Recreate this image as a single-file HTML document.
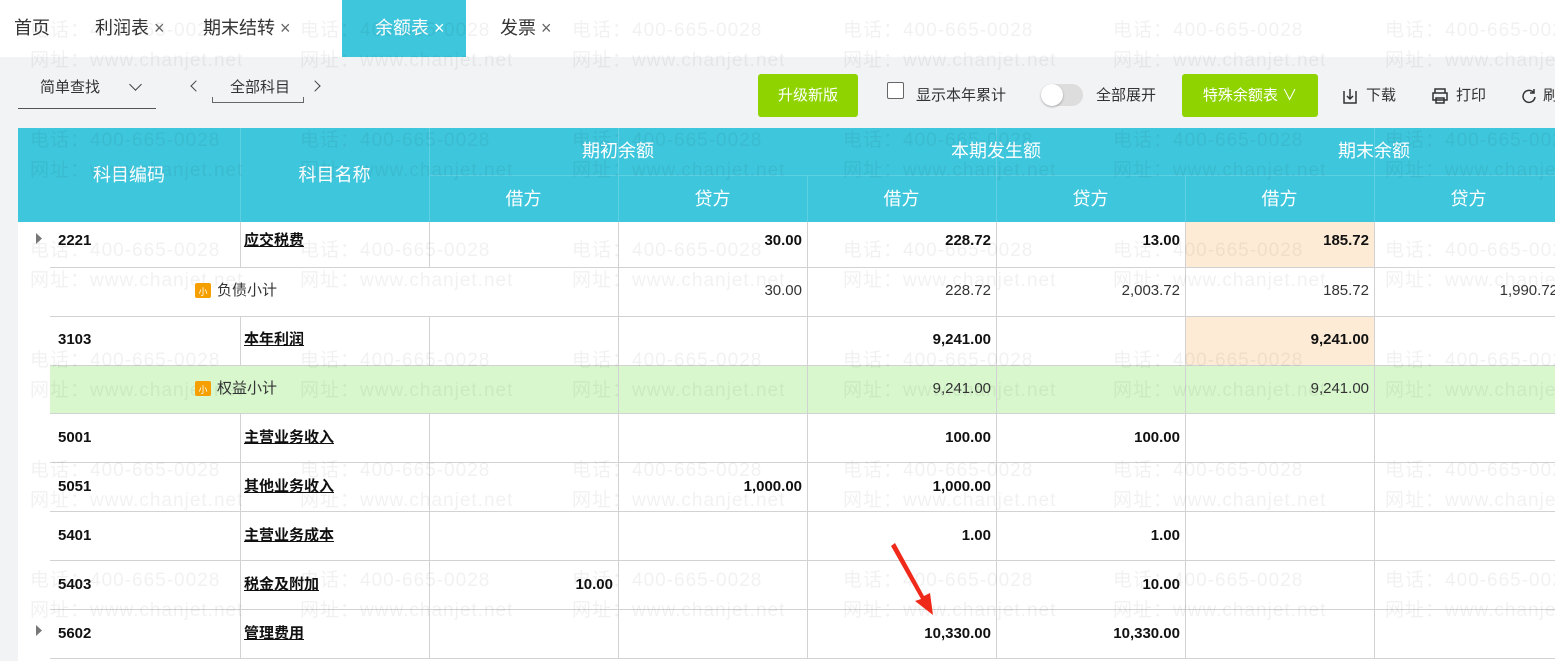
<!DOCTYPE html>
<html><head><meta charset="utf-8"><style>
*{margin:0;padding:0;box-sizing:border-box}
body{width:1555px;height:661px;overflow:hidden;background:#f2f3f5;font-family:"Liberation Sans","Noto Sans CJK SC",sans-serif;position:relative;color:#222}
.a{position:absolute}
.tabs{left:0;top:0;width:1555px;height:57px;background:#fff}
.tab{position:absolute;top:0;height:57px;line-height:57px;font-size:18px;color:#333}
.tb{font-size:15px;color:#333;line-height:20px}
.btn{background:#8fd400;color:#fff;border-radius:3px;font-size:15px;text-align:center;line-height:43px;height:43px;top:74px}
.c{position:absolute;font-size:15px;white-space:nowrap;line-height:20px}
.hd{color:#fff;font-size:18px;text-align:center;line-height:22px}
.b{font-weight:bold;color:#111}
.u{text-decoration:underline;font-weight:bold;color:#111}
.wm{position:absolute;font-size:19px;line-height:22px;color:rgba(0,0,0,0.055);letter-spacing:1px;white-space:nowrap;pointer-events:none}
</style></head><body>
<div class="a tabs"></div>
<div class="tab" style="left:14px">首页</div>
<div class="tab" style="left:95px">利润表 <span style="color:#666">×</span></div>
<div class="tab" style="left:203px">期末结转 <span style="color:#666">×</span></div>
<div class="tab" style="left:342px;width:124px;background:#3ec6dc;color:#fff;padding-left:33px">余额表 ×</div>
<div class="tab" style="left:500px">发票 <span style="color:#666">×</span></div>

<div class="a tb" style="left:40px;top:78px">简单查找</div>
<div class="a" style="left:131px;top:80px;width:9px;height:9px;border-right:1.5px solid #444;border-bottom:1.5px solid #444;transform:rotate(45deg)"></div>
<div class="a" style="left:18px;top:108px;width:138px;height:1px;background:#555"></div>
<div class="a" style="left:192px;top:82px;width:8px;height:8px;border-left:1.5px solid #444;border-bottom:1.5px solid #444;transform:rotate(45deg)"></div>
<div class="a tb" style="left:230px;top:78px">全部科目</div>
<div class="a" style="left:212px;top:97px;width:92px;height:6px;border:1px solid #666;border-top:none"></div>
<div class="a" style="left:311px;top:82px;width:8px;height:8px;border-right:1.5px solid #444;border-top:1.5px solid #444;transform:rotate(45deg)"></div>

<div class="a btn" style="left:758px;width:100px">升级新版</div>
<div class="a" style="left:887px;top:82px;width:17px;height:17px;border:1px solid #666;border-radius:2px;background:#fff"></div>
<div class="a tb" style="left:916px;top:86px">显示本年累计</div>
<div class="a" style="left:1041px;top:84px;width:42px;height:22px;border-radius:11px;background:#ddd"></div>
<div class="a" style="left:1041px;top:84px;width:22px;height:22px;border-radius:11px;background:#fff;box-shadow:0 1px 2px rgba(0,0,0,.3)"></div>
<div class="a tb" style="left:1096px;top:86px">全部展开</div>
<div class="a btn" style="left:1182px;width:136px">特殊余额表 ∨</div>
<svg class="a" style="left:1342px;top:87px" width="16" height="18"><path d="M2 4 V16 H14 V4 M8 2 V12 M5 9 L8 12 L11 9" stroke="#333" stroke-width="1.5" fill="none"/></svg>
<div class="a tb" style="left:1366px;top:86px">下载</div>
<svg class="a" style="left:1431px;top:87px" width="18" height="18"><path d="M4 6 V2 H14 V6 M2 6 H16 V13 H2 Z M5 11 H13 V16 H5 Z" stroke="#333" stroke-width="1.5" fill="none"/></svg>
<div class="a tb" style="left:1456px;top:86px">打印</div>
<svg class="a" style="left:1521px;top:88px" width="16" height="16"><path d="M13 5 A6 6 0 1 0 14 9 M13 1 V5 H9" stroke="#333" stroke-width="1.5" fill="none"/></svg>
<div class="a tb" style="left:1543px;top:86px">刷</div>

<!-- table -->
<div class="a" style="left:18px;top:128px;width:1545px;height:94px;background:#3ec6dc"></div>
<div class="a" style="left:18px;top:222px;width:1545px;height:439px;background:#fff"></div>
<div class="a" style="left:50px;top:365px;width:1513px;height:48px;background:#d8f7cd"></div>
<div class="a" style="left:1185px;top:222px;width:189px;height:45px;background:#fdebd5"></div>
<div class="a" style="left:1185px;top:316px;width:189px;height:49px;background:#fdebd5"></div>
<div id="lines"></div>

<div class="c hd" style="left:18px;top:164px;width:222px">科目编码</div>
<div class="c hd" style="left:240px;top:164px;width:189px">科目名称</div>
<div class="c hd" style="left:429px;top:140px;width:378px">期初余额</div>
<div class="c hd" style="left:807px;top:140px;width:378px">本期发生额</div>
<div class="c hd" style="left:1185px;top:140px;width:378px">期末余额</div>
<div class="c hd" style="left:429px;top:188px;width:189px">借方</div>
<div class="c hd" style="left:618px;top:188px;width:189px">贷方</div>
<div class="c hd" style="left:807px;top:188px;width:189px">借方</div>
<div class="c hd" style="left:996px;top:188px;width:189px">贷方</div>
<div class="c hd" style="left:1185px;top:188px;width:189px">借方</div>
<div class="c hd" style="left:1374px;top:188px;width:189px">贷方</div>

<div id="body"></div>

<svg class="a" style="left:0;top:0" width="1555" height="661">
<polygon points="36,233 42,238.5 36,244" fill="#777"/>
<polygon points="36,625 42,630.5 36,636" fill="#777"/>
<rect x="195" y="283" width="16" height="15" rx="2" fill="#f5a000"/>
<rect x="195" y="381" width="16" height="15" rx="2" fill="#f5a000"/>
<text x="203" y="295" font-size="9" fill="#fff" text-anchor="middle">小</text>
<text x="203" y="393" font-size="9" fill="#fff" text-anchor="middle">小</text>
<polygon points="891,546 895,543 924,596 930,593 933,615 915,601 921,599" fill="#f02a1a"/>
</svg>

<script>
var L=document.getElementById('lines'),h='';
function ln(x,y,w,hh,c){h+='<div class="a" style="left:'+x+'px;top:'+y+'px;width:'+w+'px;height:'+hh+'px;background:'+(c||'#d2d2d2')+'"></div>';}
var cols=[240,429,618,807,996,1185,1374];
cols.forEach(function(x,i){ if(i<2||i==2||i==4||i==6) ln(x,128,1,94,'#5fd0e2'); else ln(x,175,1,47,'#5fd0e2');});
ln(429,175,1134,1,'#5fd0e2');
var rows=[222,267,316,365,413,462,511,560,609,658];
rows.forEach(function(y,i){ if(i>0) ln(50,y,1513,1);});
for(var i=0;i<9;i++){var y=rows[i],hh=rows[i+1]-y;cols.forEach(function(x,j){ if((i==1||i==3)&&j<2) return; ln(x,y,1,hh);});}
L.innerHTML=h;
var data=[
['2221','应交税费','','30.00','228.72','13.00','185.72',''],
['sub','负债小计','','30.00','228.72','2,003.72','185.72','1,990.72'],
['3103','本年利润','','','9,241.00','','9,241.00',''],
['sub','权益小计','','','9,241.00','','9,241.00',''],
['5001','主营业务收入','','','100.00','100.00','',''],
['5051','其他业务收入','','1,000.00','1,000.00','','',''],
['5401','主营业务成本','','','1.00','1.00','',''],
['5403','税金及附加','10.00','','','10.00','',''],
['5602','管理费用','','','10,330.00','10,330.00','','']];
var b='';
var wx=[30,300,572,843,1113,1385],wy=[20,130,240,350,460,570];
wy.forEach(function(y){wx.forEach(function(x){b+='<div class="wm" style="left:'+x+'px;top:'+y+'px">电话：400-665-0028</div><div class="wm" style="left:'+x+'px;top:'+(y+30)+'px">网址：www.chanjet.net</div>';});});
var cyL=[231,281,330,379,428,477,526,575,624];
data.forEach(function(r,i){var cy=cyL[i];var sub=r[0]=='sub';
 if(sub){b+='<div class="c" style="left:217px;top:'+cy+'px;color:#333">'+r[1]+'</div>';}
 else{b+='<div class="c b" style="left:58px;top:'+cy+'px">'+r[0]+'</div><div class="c u" style="left:244px;top:'+cy+'px">'+r[1]+'</div>';}
 for(var k=2;k<8;k++){if(!r[k])continue;var x=cols[k-1]+189-5;
  b+='<div class="c '+(sub?'':'b')+'" style="right:'+(1555-x)+'px;top:'+cy+'px;'+(sub?'color:#333':'')+'">'+r[k]+'</div>';}
});
document.getElementById('body').innerHTML=b;
</script>
</body></html>
